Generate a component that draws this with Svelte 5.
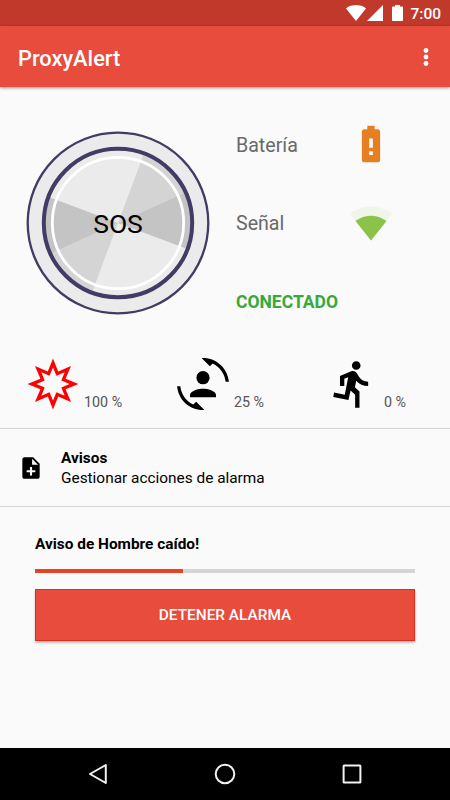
<script lang="ts">
  const title = 'ProxyAlert';
  const progress = 39;

  // point on a circle, angle in degrees counterclockwise from the right
  const polar = (r: number, deg: number) => {
    const a = (deg * Math.PI) / 180;
    return `${(r * Math.cos(a)).toFixed(2)} ${(-r * Math.sin(a)).toFixed(2)}`;
  };

  const wedges = [
    { from: 69.5, to: 24.5, tone: 'mid' },
    { from: 24.5, to: -20.5, tone: 'dark' },
    { from: 249.5, to: 204.5, tone: 'mid' },
    { from: 204.5, to: 159.5, tone: 'dark' }
  ];

  const star = (outer: number, inner: number) =>
    'M' +
    Array.from({ length: 16 }, (_, i) => polar(i % 2 ? inner : outer, i * 22.5)).join('L') +
    'Z';

  const burst = star(25.5, 13.6) + star(16.5, 9);
</script>

<div class="phone">
  <div class="status">
    <svg class="wifi" viewBox="0 0 20 16"><path d="M0 3.4C5.5-1 14.5-1 20 3.4L10 16z" /></svg>
    <svg class="cell" viewBox="0 0 16 16"><path d="M16 0v16H0z" /></svg>
    <svg class="power" viewBox="0 0 11 16">
      <path d="M3 0h5v1.6h2.2q.8 0 .8.8v12.8q0 .8-.8.8H.8q-.8 0-.8-.8V2.4q0-.8.8-.8H3z" />
    </svg>
    <span class="clock">7:00</span>
  </div>

  <header>
    <h1>{title}</h1>
    <svg class="more" viewBox="0 0 6 20">
      <circle cx="3" cy="3.5" r="2.4" />
      <circle cx="3" cy="10" r="2.4" />
      <circle cx="3" cy="16.5" r="2.4" />
    </svg>
  </header>

  <main>
    <section class="overview">
      <button class="sos">
        <svg viewBox="-92 -92 184 184">
          <circle class="outer" r="90.3" />
          <circle class="base" r="75" />
          {#each wedges as w}
            <path class={w.tone} d="M0 0L{polar(74, w.from)}A74 74 0 0 1 {polar(74, w.to)}Z" />
          {/each}
          <circle class="ring" r="74.2" />
          <circle class="halo" r="65.7" />
          <text y="10" text-anchor="middle">SOS</text>
        </svg>
      </button>

      <div class="state">
        <div class="line">
          <span>Batería</span>
          <svg class="battery" viewBox="0 0 24 24">
            <path
              d="M15.67 4H14V2h-4v2H8.33C7.6 4 7 4.6 7 5.33v15.33C7 21.4 7.6 22 8.33 22h7.33c.74 0 1.34-.6 1.34-1.33V5.33C17 4.6 16.4 4 15.67 4zM13 18h-2v-2h2v2zm0-4h-2V9h2v5z"
            />
          </svg>
        </div>
        <div class="line">
          <span>Señal</span>
          <svg class="signal" viewBox="0 0 24 24">
            <path class="faint" d="M12.01 21.49L23.64 7c-.45-.34-4.93-4-11.64-4C5.28 3 .81 6.66.36 7l11.63 14.49.01.01.01-.01z" />
            <path d="M3.53 10.95l8.46 10.54.01.01.01-.01 8.46-10.54C20.04 10.62 16.81 8 12 8c-4.81 0-8.04 2.62-8.47 2.95z" />
          </svg>
        </div>
        <div class="line"><strong>CONECTADO</strong></div>
      </div>
    </section>

    <section class="sensors">
      <div class="sensor">
        <svg viewBox="-26 -26 52 52"><path class="burst" fill-rule="evenodd" d={burst} /></svg>
        <span>100 %</span>
      </div>
      <div class="sensor">
        <svg viewBox="0 0 24 24">
          <path
            d="M7.5 21.5C4.25 19.94 1.91 16.76 1.55 13H.05C.56 19.16 5.71 24 12 24l.66-.03-3.81-3.81zM16.5 2.5c3.25 1.57 5.59 4.74 5.95 8.5h1.5C23.44 4.84 18.29 0 12 0l-.66.03 3.81 3.81z"
          />
          <circle cx="12" cy="9.1" r="3.05" />
          <path d="M6 18.1v-1c0-2 4-2.9 6-2.9s6 .9 6 2.9v1z" />
        </svg>
        <span>25 %</span>
      </div>
      <div class="sensor">
        <svg viewBox="0 0 24 24">
          <path
            d="M13.49 5.48c1.1 0 2-.9 2-2s-.9-2-2-2-2 .9-2 2 .9 2 2 2zm-3.6 13.9l1-4.4 2.1 2v6h2v-7.5l-2.1-2 .6-3c1.3 1.5 3.3 2.5 5.5 2.5v-2c-1.9 0-3.5-1-4.3-2.4l-1-1.6c-.4-.6-1-1-1.7-1-.3 0-.5.1-.8.1l-5.2 2.2v4.7h2v-3.4l1.8-.7-1.6 8.1-4.9-1-.4 2 7 1.4z"
          />
        </svg>
        <span>0 %</span>
      </div>
    </section>

    <section class="notices">
      <svg viewBox="0 0 24 24">
        <path
          d="M14 2H6c-1.1 0-1.99.9-1.99 2L4 20c0 1.1.89 2 1.99 2H18c1.1 0 2-.9 2-2V8l-6-6zm2 14h-3v3h-2v-3H8v-2h3v-3h2v3h3v2zm-3-7V3.5L18.5 9H13z"
        />
      </svg>
      <div>
        <h2>Avisos</h2>
        <p>Gestionar acciones de alarma</p>
      </div>
    </section>

    <section class="alarm">
      <h2>Aviso de Hombre caído!</h2>
      <div class="track"><div class="bar" style:width="{progress}%"></div></div>
      <button class="stop">DETENER ALARMA</button>
    </section>
  </main>

  <nav>
    <svg viewBox="0 0 22 22"><path d="M18.8 2v18L3 11z" /></svg>
    <svg viewBox="0 0 22 22"><circle cx="11" cy="11" r="9.3" /></svg>
    <svg viewBox="0 0 22 22"><rect x="2.6" y="2.6" width="16.8" height="16.8" rx="0.5" /></svg>
  </nav>
</div>

<style>
  :global(body) {
    margin: 0;
  }

  .phone {
    display: flex;
    flex-direction: column;
    width: 450px;
    height: 800px;
    overflow: hidden;
    background: #fafafa;
    color: #000;
    font-family: Roboto, sans-serif;
  }

  svg {
    display: block;
    flex: none;
  }

  h1,
  h2,
  p {
    margin: 0;
  }

  button {
    padding: 0;
    border: 0;
    background: none;
    font-family: inherit;
  }

  .status {
    display: flex;
    align-items: center;
    justify-content: flex-end;
    box-sizing: border-box;
    height: 26px;
    padding-right: 9px;
    background: #c0392b;
    color: #fff;
    fill: #fff;
  }

  .wifi {
    width: 20px;
    height: 16px;
    margin-right: 1px;
  }

  .cell {
    width: 16px;
    height: 16px;
    margin-right: 9px;
  }

  .power {
    width: 11px;
    height: 16px;
    margin-right: 7px;
  }

  .clock {
    padding-top: 2px;
    font-size: 15.5px;
    font-weight: 500;
    line-height: 26px;
  }

  header {
    display: flex;
    align-items: center;
    justify-content: space-between;
    box-sizing: border-box;
    height: 61px;
    padding: 0 21px 0 18px;
    background: #e74c3c;
    box-shadow: 0 1px 3px rgba(0, 0, 0, 0.4);
  }

  h1 {
    padding-top: 4px;
    color: #fff;
    font-size: 21.8px;
    font-weight: 500;
    line-height: 30px;
  }

  .more {
    width: 6px;
    height: 20px;
    fill: #fff;
  }

  main {
    flex: 1;
  }

  .overview {
    display: flex;
    height: 271px;
    padding-left: 26px;
  }

  .sos {
    width: 184px;
    height: 184px;
    margin-top: 44px;
  }

  .outer {
    fill: #ebebeb;
    stroke: #433b66;
    stroke-width: 2.3;
  }

  .base {
    fill: #ebebeb;
  }

  .mid {
    fill: #d4d4d4;
  }

  .dark {
    fill: #c4c4c4;
  }

  .ring {
    fill: none;
    stroke: #433b66;
    stroke-width: 4;
  }

  .halo {
    fill: none;
    stroke: #fff;
    stroke-width: 2.8;
  }

  .sos text {
    font-size: 26.5px;
  }

  .state {
    padding: 18px 0 0 26px;
  }

  .line {
    display: flex;
    align-items: center;
    justify-content: space-between;
    width: 157px;
    height: 78.5px;
    color: #696969;
    font-size: 19.6px;
  }

  .line span,
  .line strong {
    padding-top: 2px;
  }

  .line strong {
    color: #37a93c;
    font-size: 17.5px;
    font-weight: 700;
  }

  .battery,
  .signal {
    width: 44px;
    height: 44px;
  }

  .battery {
    fill: #e67e22;
  }

  .signal {
    fill: #8bc34a;
  }

  .faint {
    fill: #f0f5ea;
  }

  .sensors {
    display: grid;
    grid-template-columns: repeat(3, 150px);
    height: 70px;
    border-bottom: 1px solid #d6d6d6;
  }

  .sensor {
    display: flex;
    gap: 5px;
    height: 52px;
    padding-left: 27px;
  }

  .sensor svg {
    width: 52px;
    height: 52px;
  }

  .sensor span {
    align-self: flex-end;
    margin-bottom: -1px;
    color: #555;
    font-size: 14.3px;
    line-height: 18px;
  }

  .burst {
    fill: #f00;
  }

  .notices {
    display: flex;
    align-items: center;
    gap: 17px;
    height: 77px;
    padding-left: 18px;
    border-bottom: 1px solid #d6d6d6;
  }

  .notices svg {
    width: 26px;
    height: 26px;
  }

  .notices div {
    padding-top: 2px;
  }

  h2 {
    font-size: 15.4px;
    font-weight: 700;
    line-height: 20px;
  }

  .notices p {
    font-size: 15.4px;
    line-height: 21px;
  }

  .alarm {
    padding: 27px 35px 0;
  }

  .track {
    height: 4px;
    margin-top: 15px;
    background: #d5d5d5;
  }

  .bar {
    height: 100%;
    background: #e74425;
  }

  .stop {
    display: block;
    box-sizing: border-box;
    width: 100%;
    height: 52px;
    margin-top: 16px;
    border: 1px solid #e42b1b;
    background: #e74c3c;
    box-shadow: 0 2px 2px rgba(0, 0, 0, 0.25);
    color: #fff;
    font-size: 15.4px;
    font-weight: 500;
  }

  nav {
    display: flex;
    align-items: center;
    justify-content: center;
    gap: 105px;
    height: 52px;
    background: #000;
  }

  nav svg {
    width: 22px;
    height: 22px;
    fill: none;
    stroke: #f2f2f2;
    stroke-width: 2;
    stroke-linejoin: round;
  }
</style>
